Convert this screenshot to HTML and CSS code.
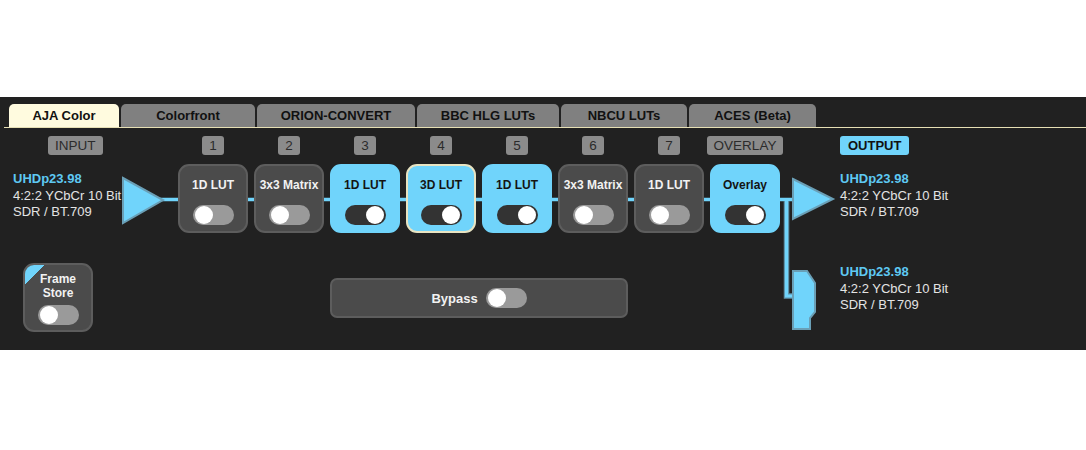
FILE: index.html
```html
<!DOCTYPE html>
<html lang="en">
<head>
    <meta charset="UTF-8">
    <title>AJA Color Pipeline</title>
    <link rel="stylesheet" href="styles.css">
</head>
<body>

<div class="panel">
    <!-- signal wires, drawn under the cards -->
    <svg class="wires" width="1086" height="253" viewBox="0 0 1086 253">
        <line x1="158" y1="102.5" x2="796" y2="102.5" stroke="#70d4fb" stroke-width="3.5"/>
        <path d="M786.5 104 V199 H795" fill="none" stroke="#5f93aa" stroke-width="5.5"/>
        <path d="M786.5 101 V199 H795" fill="none" stroke="#70d4fb" stroke-width="3"/>
        <polygon points="123,81 163,103 123,126" fill="#70d4fb" stroke="#6a9fb6" stroke-width="2"/>
        <polygon points="793,82 833,102 793,122" fill="#70d4fb" stroke="#6a9fb6" stroke-width="2"/>
        <polygon points="793,174 807,174 815,186 815,215 810,221 810,232 793,232" fill="#70d4fb" stroke="#6a9fb6" stroke-width="2"/>
    </svg>

    <div class="tabs">
        <div class="tab active">AJA Color</div>
        <div class="tab">Colorfront</div>
        <div class="tab">ORION-CONVERT</div>
        <div class="tab">BBC HLG LUTs</div>
        <div class="tab">NBCU LUTs</div>
        <div class="tab">ACES (Beta)</div>
    </div>

    <div class="flow">
        <!-- stage labels -->
        <span class="label label-input">INPUT</span>
        <span class="label">1</span>
        <span class="label">2</span>
        <span class="label">3</span>
        <span class="label">4</span>
        <span class="label">5</span>
        <span class="label">6</span>
        <span class="label">7</span>
        <span class="label">OVERLAY</span>
        <span class="label label-output">OUTPUT</span>

        <!-- pipeline -->
        <div class="signal">
            <div class="format">UHDp23.98</div>
            <div>4:2:2 YCbCr 10 Bit</div>
            <div>SDR / BT.709</div>
        </div>
        <div class="card"><span class="card-title">1D LUT</span><span class="toggle"></span></div>
        <div class="card"><span class="card-title">3x3 Matrix</span><span class="toggle"></span></div>
        <div class="card active"><span class="card-title">1D LUT</span><span class="toggle on"></span></div>
        <div class="card active selected"><span class="card-title">3D LUT</span><span class="toggle on"></span></div>
        <div class="card active"><span class="card-title">1D LUT</span><span class="toggle on"></span></div>
        <div class="card"><span class="card-title">3x3 Matrix</span><span class="toggle"></span></div>
        <div class="card"><span class="card-title">1D LUT</span><span class="toggle"></span></div>
        <div class="card active"><span class="card-title">Overlay</span><span class="toggle on"></span></div>
        <div class="signal signal-out">
            <div class="format">UHDp23.98</div>
            <div>4:2:2 YCbCr 10 Bit</div>
            <div>SDR / BT.709</div>
        </div>

        <!-- bottom row -->
        <div class="card frame-store"><span class="card-title">Frame<br>Store</span><span class="toggle"></span></div>
        <div class="bypass"><span>Bypass</span><span class="toggle"></span></div>
        <div class="signal signal-out signal-out2">
            <div class="format">UHDp23.98</div>
            <div>4:2:2 YCbCr 10 Bit</div>
            <div>SDR / BT.709</div>
        </div>
    </div>
</div>

</body>
</html>
```

FILE: styles.css
```css
/* General */
body {
    margin: 0;
    background-color: #ffffff;
    font-family: "Liberation Sans", Arial, sans-serif;
}
.panel {
    position: relative;
    margin-top: 97px;
    height: 253px;
    background-color: #212121;
    overflow: hidden;
}
.wires {
    position: absolute;
    top: 0;
    left: 0;
    z-index: 0;
}

/* Tabs */
.tabs {
    position: relative;
    z-index: 1;
    display: flex;
    gap: 2px;
    margin: 7px 0 0 4px;
    padding-left: 5px;
    border-bottom: 1px solid #e6dfb4;
}
.tab {
    height: 23px;
    line-height: 23px;
    text-align: center;
    font-size: 13px;
    font-weight: bold;
    color: #111;
    background-color: #808080;
    border-radius: 5px 5px 0 0;
}
.tab:nth-child(1) { width: 110px; }
.tab:nth-child(2) { width: 134px; }
.tab:nth-child(3) { width: 158px; }
.tab:nth-child(4) { width: 142px; }
.tab:nth-child(5) { width: 126px; }
.tab:nth-child(6) { width: 127px; }
.tab.active {
    background-color: #fffbdf;
}

/* Pipeline grid */
.flow {
    position: relative;
    z-index: 1;
    display: grid;
    grid-template-columns: 172px repeat(8, 70px) auto;
    grid-template-rows: 19px 69px auto;
    column-gap: 6px;
    row-gap: 9px;
    margin-top: 8px;
}
.label {
    justify-self: center;
    justify-self: unsafe center;
    height: 19px;
    line-height: 19px;
    padding: 0 7px;
    font-size: 13.5px;
    color: #2b2b2b;
    background-color: #8b8b8b;
    border-radius: 3px;
    white-space: nowrap;
}
.label-input {
    justify-self: start;
    margin-left: 48px;
}
.label-output {
    justify-self: start;
    margin-left: 54px;
    padding: 0 8px;
    font-size: 13px;
    font-weight: bold;
    color: #111;
    background-color: #70d4fb;
}

/* Signal text */
.signal {
    align-self: start;
    margin-top: 7px;
    padding-left: 13px;
    font-size: 13px;
    line-height: 16.5px;
    color: #e4e4e4;
    white-space: nowrap;
}
.signal .format {
    font-weight: bold;
    color: #5ec9f3;
}
.signal-out {
    padding-left: 54px;
}
.signal-out2 {
    grid-row: 3;
    grid-column: 10;
    margin-top: 22px;
}

/* Cards */
.card {
    box-sizing: border-box;
    width: 70px;
    height: 69px;
    display: flex;
    flex-direction: column;
    align-items: center;
    padding-top: 12px;
    background-color: #4b4b4b;
    border: 2px solid #5d5d5d;
    border-radius: 11px;
}
.card-title {
    height: 14px;
    line-height: 14px;
    margin-bottom: 13px;
    font-size: 12px;
    font-weight: bold;
    color: #f2f2f2;
    white-space: nowrap;
}
.card.active {
    background-color: #70d4fb;
    border-color: #70d4fb;
}
.card.active .card-title {
    color: #141414;
}
.card.selected {
    border-color: #e8e4c2;
}
.frame-store {
    position: relative;
    overflow: hidden;
    grid-row: 3;
    grid-column: 1;
    margin: 21px 0 0 23px;
    padding-top: 7px;
    text-align: center;
}
.frame-store::before {
    content: "";
    position: absolute;
    top: 0;
    left: 0;
    width: 20px;
    height: 20px;
    background: linear-gradient(135deg, #70d4fb 50%, transparent 50%);
}
.frame-store .card-title {
    height: 28px;
    line-height: 14px;
    margin-bottom: 5px;
}

/* Bypass */
.bypass {
    grid-row: 3;
    grid-column: 4 / 8;
    box-sizing: border-box;
    height: 40px;
    margin-top: 36px;
    display: flex;
    align-items: center;
    justify-content: center;
    gap: 8px;
    font-size: 13px;
    font-weight: bold;
    color: #f2f2f2;
    background-color: #4b4b4b;
    border: 2px solid #5d5d5d;
    border-radius: 7px;
}

/* Toggles */
.toggle {
    position: relative;
    display: block;
    flex: none;
    width: 41px;
    height: 20px;
    border-radius: 10px;
    background-color: #9a9a9a;
}
.toggle::after {
    content: "";
    position: absolute;
    top: 1px;
    left: 2px;
    width: 18px;
    height: 18px;
    border-radius: 50%;
    background-color: #ffffff;
}
.toggle.on {
    background-color: #333333;
}
.toggle.on::after {
    left: 21px;
}
```
